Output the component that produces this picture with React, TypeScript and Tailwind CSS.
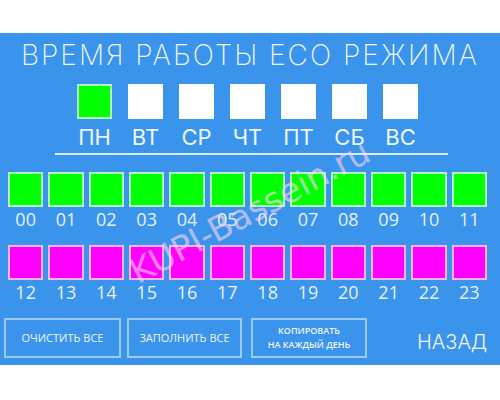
import React from "react";

const days = ["ПН", "ВТ", "СР", "ЧТ", "ПТ", "СБ", "ВС"];
const topHours = ["00", "01", "02", "03", "04", "05", "06", "07", "08", "09", "10", "11"];
const bottomHours = ["12", "13", "14", "15", "16", "17", "18", "19", "20", "21", "22", "23"];

const HourRow: React.FC<{ hours: string[]; on: boolean }> = ({ hours, on }) => (
  <div className="ml-[8px] grid w-[479px] grid-cols-12 gap-x-[5px]">
    {hours.map((h) => (
      <div key={h} className="flex flex-col items-center">
        <div
          className={`h-[35px] w-full border-2 ${
            on ? "border-[#b4f7bd] bg-[#00ff00]" : "border-[#f7b4f4] bg-[#ff00ff]"
          }`}
        />
        <span className="mt-[3px] font-['Open_Sans'] text-[18px] leading-none text-[#e6f1ff]">
          {h}
        </span>
      </div>
    ))}
  </div>
);

const App: React.FC = () => {
  return (
    <div className="h-[400px] w-[500px] bg-white pt-[33px]">
      <div className="relative h-[332px] overflow-hidden bg-[#3b94ec] pt-[8px]">
        {/* ===== TITLE ===== */}
        <h1 className="text-center font-['Inter'] text-[28px] font-extralight leading-none tracking-[2px] text-[#f2f8ff]">
          ВРЕМЯ РАБОТЫ ECO РЕЖИМА
        </h1>

        {/* ===== DAYS ===== */}
        <div className="ml-[77px] mt-[15px] flex gap-x-[16px]">
          {days.map((d, i) => (
            <div key={d} className="flex w-[35px] flex-col items-center">
              <div
                className={`h-[35px] w-[35px] ${
                  i === 0 ? "border-2 border-[#b4f7bd] bg-[#00ff00]" : "bg-white"
                }`}
              />
              <span className="mt-[7px] whitespace-nowrap font-['Inter'] text-[22px] leading-none text-[#eef6ff]">
                {d}
              </span>
            </div>
          ))}
        </div>
        <div className="ml-[55px] mt-[5px] h-[2px] w-[393px] bg-[#dcecff]" />

        {/* ===== HOURS ===== */}
        <div className="mt-[17px]">
          <HourRow hours={topHours} on />
        </div>
        <div className="mt-[17px]">
          <HourRow hours={bottomHours} on={false} />
        </div>

        {/* ===== BUTTONS ===== */}
        <div className="mt-[17px] flex items-center">
          <button className="ml-[4px] flex h-[40px] w-[117px] items-center justify-center border-2 border-[#9ccaf6] font-['Open_Sans'] text-[11px] text-[#eef6ff]">
            ОЧИСТИТЬ ВСЕ
          </button>
          <button className="ml-[6px] flex h-[40px] w-[115px] items-center justify-center border-2 border-[#9ccaf6] font-['Open_Sans'] text-[11px] text-[#eef6ff]">
            ЗАПОЛНИТЬ ВСЕ
          </button>
          <button className="ml-[9px] flex h-[40px] w-[116px] flex-col items-center justify-center border-2 border-[#9ccaf6] font-['Open_Sans'] text-[9px] font-semibold leading-[14px] text-[#eef6ff]">
            <span>КОПИРОВАТЬ</span>
            <span>НА КАЖДЫЙ ДЕНЬ</span>
          </button>
          <span className="ml-[50px] mt-[8px] font-['Inter'] text-[20px] font-light leading-none text-[#f2f8ff]">
            НАЗАД
          </span>
        </div>

        {/* watermark */}
        <div className="pointer-events-none absolute left-[250px] top-[179px] -translate-x-1/2 -translate-y-1/2 -rotate-[28deg] whitespace-nowrap font-['DejaVu_Sans'] text-[34px] text-[#ffd6ee] opacity-60">
          KUPI-Bassein.ru
        </div>
      </div>
    </div>
  );
};

export default App;
